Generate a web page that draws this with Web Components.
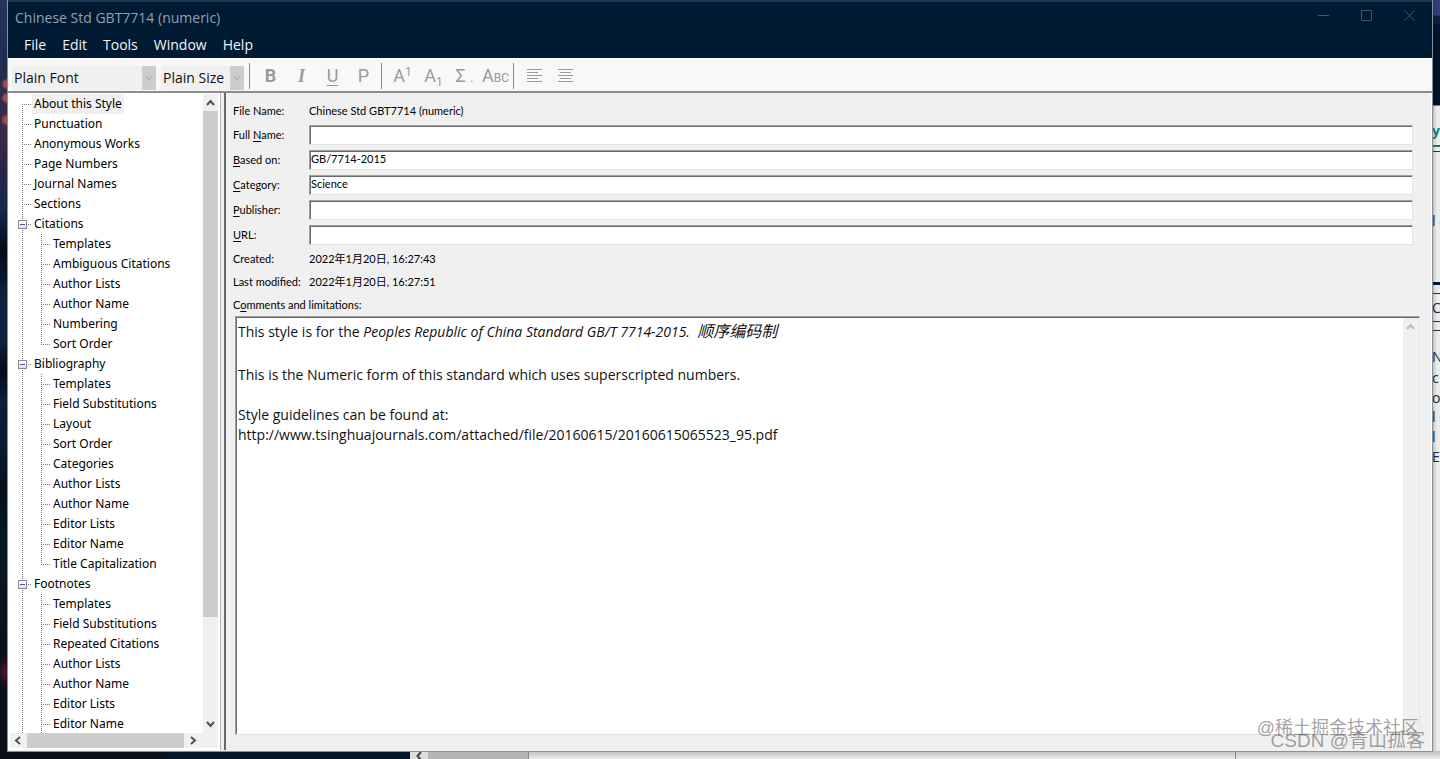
<!DOCTYPE html>
<html lang="en">
<head>
<meta charset="utf-8">
<title>Chinese Std GBT7714 (numeric)</title>
<style>
  html, body { margin: 0; }
  body {
    --ui: "Open Sans", "Noto Sans CJK SC", sans-serif;
    --tree: "Noto Sans", "Noto Sans CJK SC", sans-serif;
    --form: Lato, "Noto Sans CJK SC", sans-serif;
    font: 14px/20px var(--ui);
    color: #111;
    background: #0a1426;
  }
</style>
</head>
<body>
<desktop-shell>
  <style-window>
    <title-bar slot="top" caption="Chinese Std GBT7714 (numeric)"></title-bar>
    <menu-bar slot="top">
      <button>File</button><button>Edit</button><button>Tools</button><button>Window</button><button>Help</button>
    </menu-bar>
    <format-bar slot="top"></format-bar>
    <style-tree slot="side"></style-tree>
    <about-form slot="main"></about-form>
  </style-window>
</desktop-shell>

<script>
const define = (name, html, setup) => {
  const template = document.createElement('template');
  template.innerHTML = '<style>:host,*{box-sizing:border-box}button,input,select{font:inherit;color:inherit;margin:0;padding:0;border:0;background:none;border-radius:0}</style>' + html;
  customElements.define(name, class extends HTMLElement {
    constructor() {
      super();
      this.attachShadow({ mode: 'open' }).append(template.content.cloneNode(true));
    }
    connectedCallback() {
      if (setup && !this.ready) { this.ready = true; setup(this, this.shadowRoot); }
    }
  });
};

/* Desktop with strips of other windows behind the main one */
define('desktop-shell', `
<style>
  :host { display: grid; grid-template: 1fr 8px / 8px 1fr 8px; min-height: 100vh; position: relative; overflow: hidden; }
  .left { background:
    radial-gradient(circle at 7px 84px, #a0504c 0 3px, #a0504c00 6px),
    radial-gradient(circle at 7px 98px, #a0504c 0 3px, #a0504c00 6px),
    radial-gradient(circle at 7px 120px, #a0504c 0 3px, #a0504c00 6px),
    radial-gradient(ellipse 8px 16px at 6px 672px, #5a1030, #5a103000),
    linear-gradient(#25355a 0, #1d2e50 60px, #3a2c48 130px, #30264a 160px, #12284c 210px, #040a16 250px, #0e2342 300px, #0e2342 340px, #050b18 370px, #0b1e3a 400px, #0a1a30 450px, #04101c 490px, #061a26 540px, #0c0f1c 640px, #0c0f1c 100%); }
  .right { overflow: hidden; background: linear-gradient(#33427a 0 15px, #0e1f3c 16px 24px, #02142c 25px 105px, #ececec 106px 100%); position: relative; box-shadow: inset 4px 0 4px -3px #0006; }
  .right span { position: absolute; left: 0; white-space: nowrap; color: #222; }
  .right i { position: absolute; left: 0; right: 0; height: 1px; background: #234; }
  .right .teal { background: #0a8074; height: 2px; }
  .right .navy { background: #001a33; height: 3px; }
  .right .y { color: #0a8074; font-weight: 700; }
  .bottom { grid-column: 1 / -1; display: flex; background: linear-gradient(#bdbdbd, #ededed); }
  .dark { flex: 0 0 410px; background: linear-gradient(90deg, #0b0f1a 166px, #02152b 167px); }
  .arrow { flex: 0 0 18px; background: #ddd; }
  .arrow svg { display: block; margin: auto; }
  .thumb { flex: 0 0 100px; background: #b4b4b4; }
  .page { flex: 1; border-left: 1px solid #888; display: flex; }
  .page b { width: 707px; border-right: 1px solid #888; }
  .mark { position: absolute; z-index: 2; font: 18px/24px "Liberation Sans", "Noto Sans CJK SC", sans-serif; color: #6669; white-space: nowrap; }
  .m1 { right: 21px; bottom: 19px; }
  .m2 { right: 15px; bottom: 6px; font-size: 19px; }
</style>
<div class="left"></div>
<slot></slot>
<div class="right">
  <span class="y" style="top:121px">y</span><i class="teal" style="top:145px"></i><i style="top:151px"></i>
  <span style="top:211px">l a</span><i class="navy" style="top:282px"></i><i style="top:293px"></i>
  <span style="top:298px">C</span><i style="top:321px"></i><i style="top:330px"></i>
  <span style="top:347px">N</span><span style="top:368px">c</span><span style="top:388px">o</span>
  <span style="top:407px">l c</span><span style="top:427px">l</span><span style="top:447px">E</span>
</div>
<div class="bottom">
  <div class="dark"></div>
  <div class="arrow"><svg width="8" height="8"><path d="M6 1 2.500 5 6 9" fill="none" stroke="#444" stroke-width="2"/></svg></div>
  <div class="thumb"></div>
  <div class="page"><b></b></div>
</div>
<div class="mark m1">@稀土掘金技术社区</div>
<div class="mark m2">CSDN @青山孤客</div>
`);

define('style-window', `
<style>
  :host { display: flex; flex-direction: column; min-width: 0; background: #f0f0f0; border-top: 2px solid #1d3a55; position: relative; box-shadow: 0 0 0 1px #8a9098; z-index: 1; }
  .work { flex: 1; display: flex; border-top: 2px solid #8c8c8c; padding-bottom: 1px; }
  .side { flex: 0 0 213px; display: flex; background: #fff; border-right: 1px solid #b4b4b4; }
  .main { flex: 1; min-width: 0; display: flex; margin-left: 3px; border-left: 2px solid #696969; border-right: 1px solid #fff; }
  ::slotted([slot=side]), ::slotted([slot=main]) { flex: 1; min-width: 0; }
</style>
<slot name="top"></slot>
<div class="work"><div class="side"><slot name="side"></slot></div><div class="main"><slot name="main"></slot></div></div>
`);

define('title-bar', `
<style>
  :host { display: flex; justify-content: space-between; height: 31px; background: #001a33; color: #93a1b0; }
  h1 { margin: 0; padding: 6px 0 0 7px; font-size: 14px; font-weight: 400; line-height: 20px; }
  button { width: 43px; height: 27px; display: grid; place-items: center; }
  svg { display: block; fill: none; stroke: #41586e; }
  nav { display: flex; padding-right: 1px; }
</style>
<h1></h1>
<nav aria-label="Window controls">
  <button aria-label="Minimize"><svg width="11" height="11"><path d="M0 5.500h11"/></svg></button>
  <button aria-label="Maximize"><svg width="11" height="11"><path d="M.5.500h10v10H.500z"/></svg></button>
  <button aria-label="Close"><svg width="11" height="11"><path d="m.5.500 10 10m0-10-10 10"/></svg></button>
</nav>
`, (el, root) => { root.querySelector('h1').textContent = el.getAttribute('caption'); });

define('menu-bar', `
<style>
  :host { display: flex; gap: 16px; height: 25px; padding: 2px 16px 3px; background: #001a33; color: #f2f4f6; }
  ::slotted(button) { font: inherit; color: inherit; background: none; border: 0; margin: 0; padding: 0; }
</style>
<slot></slot>
`);

define('combo-box', `
<style>
  :host { display: grid; grid-template-columns: 1fr 14px; height: 24px; background: #f0f0f0; color: #111; }
  select { grid-area: 1 / 1 / 2 / 3; appearance: none; outline: 0; padding-left: 2px; line-height: 24px; }
  svg { grid-area: 1 / 2; background: #cdcdcd; pointer-events: none; }
</style>
<select></select>
<svg width="14" height="24"><path d="m3.500 10 3.500 3.500 3.500-3.500" fill="none" stroke="#999"/></svg>
`, (el, root) => {
  const select = root.querySelector('select');
  select.setAttribute('aria-label', el.getAttribute('label'));
  select.add(new Option(el.getAttribute('value')));
});

define('format-bar', `
<style>
  :host { display: flex; height: 33px; background: #f8f8f8; padding-left: 4px; color: #9a9a9a; border-top: 1px solid #fff; font-family: Roboto, sans-serif; }
  combo-box { margin-top: 7px; font-family: var(--ui); }
  .font { width: 144px; margin-right: 5px; }
  .size { width: 83px; margin-right: 5px; }
  .group { display: flex; border-left: 1px solid #8c8c8c; height: 26px; margin-top: 4px; padding: 0 2px 0 5px; }
  button { width: 31px; height: 26px; font-size: 18px; line-height: 26px; text-align: center; white-space: nowrap; }
  .b { font-weight: 700; }
  .i { font-family: "Liberation Serif", serif; font-style: italic; font-weight: 700; }
  .u { text-decoration: underline; text-underline-offset: 3px; }
  small { font-size: 12px; line-height: 10px; }
  .up { vertical-align: 6px; }
  .down { vertical-align: -4px; }
  svg { display: block; margin: auto; stroke: #999; fill: none; }
</style>
<combo-box class="font" label="Font" value="Plain Font"></combo-box>
<combo-box class="size" label="Size" value="Plain Size"></combo-box>
<div class="group">
  <button class="b">B</button><button class="i">I</button><button class="u">U</button><button>P</button>
</div>
<div class="group">
  <button>A<small class="up">1</small></button><button>A<small class="down">1</small></button><button>Σ <small>.</small></button><button>A<small>BC</small></button>
</div>
<div class="group">
  <button aria-label="Align left"><svg width="16" height="14"><path d="M0 .5h15M0 3.500h11M0 6.500h15M0 9.500h11M0 12.500h15"/></svg></button>
  <button aria-label="Align center"><svg width="16" height="14"><path d="M0 .5h15M2 3.500h11M0 6.500h15M2 9.500h11M0 12.500h15"/></svg></button>
</div>
`);

/* One row of the tree; dotted guides are drawn as background gradients */
define('tree-row', `
<style>
  :host { --dot: #777; display: flex; height: 20px; font: 12px/20px var(--tree); color: #000; white-space: nowrap; }
  .trunk, .guide { flex: none; background-repeat: no-repeat; }
  .guide { width: 22px; position: relative;
    background-image: repeating-linear-gradient(var(--dot) 0 1px, #fff 1px 2px), repeating-linear-gradient(90deg, var(--dot) 0 1px, #fff 1px 2px);
    background-size: 1px 100%, 10px 1px; background-position: 12px 0, 12px 10px; }
  .trunk { width: 19px; display: none; background-image: repeating-linear-gradient(var(--dot) 0 1px, #fff 1px 2px); background-size: 1px 100%; background-position: 12px 0; }
  :host([child]) .trunk { display: block; }
  :host([first]) .guide { background-size: 1px 10px, 10px 1px; background-position: 12px 10px, 12px 10px; }
  :host([last]) .guide { background-size: 1px 10px, 10px 1px; }
  a { color: inherit; text-decoration: none; padding: 0 2px; }
  :host([selected]) a { background: #f0f0f0; }
  button { display: none; position: absolute; left: 8px; top: 6px; width: 9px; height: 9px; border: 1px solid #8a8a8a; background: linear-gradient(#fff, #e0e0e0); }
  :host([open]) button { display: block; }
  button::before { content: ""; display: block; width: 5px; height: 1px; margin: 3px 1px; background: #4a55a8; }
</style>
<span class="trunk"></span><span class="guide"><button aria-label="Collapse"></button></span><a href="#"></a>
`, (el, root) => { root.querySelector('a').textContent = el.getAttribute('label'); });

define('style-tree', `
<style>
  :host { display: grid; grid-template: 1fr 15px / 1fr 15px; padding: 1px 2px 2px; }
  .rows { height: 0; min-height: 100%; overflow: hidden; }
  .v, .h { display: flex; background: #f0f0f0; }
  .v { flex-direction: column; }
  .h { grid-column: 1 / -1; padding-right: 15px; }
  .v svg, .h svg { flex: none; display: block; fill: none; stroke: #505050; stroke-width: 2; }
  .v b { flex: 0 1 506px; background: #cdcdcd; }
  .h b { flex: 0 1 157px; background: #cdcdcd; }
  .gap { flex: 1; }
</style>
<div class="rows"></div>
<div class="v">
  <svg width="15" height="17"><path d="m4 11 3.500-4 3.500 4"/></svg><b></b><span class="gap"></span><svg width="15" height="17"><path d="m4 6 3.500 4 3.500-4"/></svg>
</div>
<div class="h">
  <svg width="17" height="15"><path d="m10 4-4 3.500 4 3.500"/></svg><b></b><svg width="17" height="15"><path d="m7 4 4 3.500-4 3.500"/></svg>
</div>
`, (el, root) => {
  const data = [
    ['About this Style'], ['Punctuation'], ['Anonymous Works'], ['Page Numbers'], ['Journal Names'], ['Sections'],
    ['Citations', 'Templates', 'Ambiguous Citations', 'Author Lists', 'Author Name', 'Numbering', 'Sort Order'],
    ['Bibliography', 'Templates', 'Field Substitutions', 'Layout', 'Sort Order', 'Categories', 'Author Lists', 'Author Name', 'Editor Lists', 'Editor Name', 'Title Capitalization'],
    ['Footnotes', 'Templates', 'Field Substitutions', 'Repeated Citations', 'Author Lists', 'Author Name', 'Editor Lists', 'Editor Name']
  ];
  const rows = root.querySelector('.rows');
  const add = (label, flags) => {
    const row = document.createElement('tree-row');
    row.setAttribute('label', label);
    for (const f in flags) row.toggleAttribute(f, flags[f]);
    rows.append(row);
  };
  data.forEach(([name, ...kids], i) => {
    add(name, { first: i === 0, selected: i === 0, open: kids.length > 0 });
    kids.forEach((kid, k) => add(kid, { child: true, last: k === kids.length - 1 && i < data.length - 1 }));
  });
});

define('form-row', `
<style>
  :host { display: grid; grid-template-columns: 76px 1fr; height: 23px; align-items: center; font: 11px/16px var(--form); color: #000; }
  :host([edit]) { height: 25px; }
  u { text-underline-offset: 2px; }
  label { white-space: nowrap; }
  input { width: 100%; height: 20px; padding: 0 1px 2px; background: #fff; border: 1px solid #e3e3e3; border-top-color: #a0a0a0; border-left-color: #a0a0a0; box-shadow: inset 1px 1px #696969; outline: 0; }
</style>
<label></label>
`, (el, root) => {
  const label = root.querySelector('label');
  const text = el.getAttribute('label');
  const at = text.indexOf('_');
  if (at < 0) label.textContent = text;
  else {
    const key = document.createElement('u');
    key.textContent = text[at + 1];
    label.append(text.slice(0, at), key, text.slice(at + 2));
  }
  if (el.hasAttribute('edit')) {
    const input = document.createElement('input');
    input.id = 'field';
    label.htmlFor = 'field';
    input.value = el.getAttribute('value') || '';
    root.append(input);
  } else if (el.hasAttribute('value')) {
    const out = document.createElement('span');
    out.textContent = el.getAttribute('value');
    root.append(out);
  }
});

define('comment-box', `
<style>
  :host { display: flex; background: #fff; border: 1px solid #e3e3e3; border-top-color: #a0a0a0; border-left-color: #a0a0a0; box-shadow: inset 1px 1px #696969; color: #111; }
  .text { flex: 1; padding: 5px 2px; outline: 0; }
  p { margin: 0; min-height: 20px; }
  p:first-child { min-height: 23px; }
  .cjk { font-family: "Noto Sans CJK SC", sans-serif; font-size: 16px; line-height: 16px; }
  .bar { flex: 0 0 16px; background: #f0f0f0; margin-top: 1px; }
  svg { display: block; fill: none; stroke: #bcbcbc; stroke-width: 2; }
</style>
<div class="text" role="textbox" aria-multiline="true" aria-label="Comments and limitations" contenteditable="true" spellcheck="false"><p>This style is for the <i>Peoples Republic of China Standard GB/T 7714-2015.&nbsp; <span class="cjk">顺序编码制</span></i></p><p></p><p>This is the Numeric form of this standard which uses superscripted numbers.</p><p></p><p>Style guidelines can be found at:</p><p>http://www.tsinghuajournals.com/attached/file/20160615/20160615065523_95.pdf</p></div>
<div class="bar"><svg width="15" height="17"><path d="m4 11 3.500-4 3.500 4"/></svg></div>
`);

define('about-form', `
<style>
  :host { display: flex; flex-direction: column; padding: 6px 11px 15px 7px; }
  .fields { margin-right: 7px; }
  comment-box { flex: 1; margin-left: 2px; }
</style>
<div class="fields">
  <form-row label="File Name:" value="Chinese Std GBT7714 (numeric)"></form-row>
  <form-row edit label="Full _Name:"></form-row>
  <form-row edit label="_Based on:" value="GB/7714-2015"></form-row>
  <form-row edit label="_Category:" value="Science"></form-row>
  <form-row edit label="_Publisher:"></form-row>
  <form-row edit label="_URL:"></form-row>
  <form-row label="Created:" value="2022年1月20日, 16:27:43"></form-row>
  <form-row label="Last modified:" value="2022年1月20日, 16:27:51"></form-row>
  <form-row label="C_omments and limitations:"></form-row>
</div>
<comment-box></comment-box>
`);
</script>
</body>
</html>
